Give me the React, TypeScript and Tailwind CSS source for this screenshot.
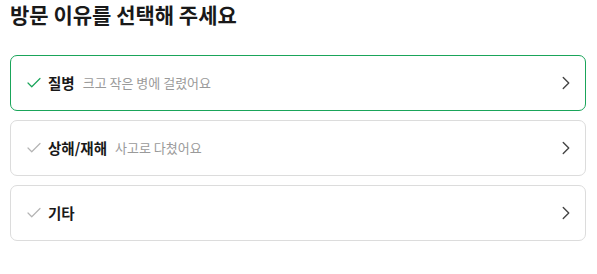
import { Check, ChevronRight } from "lucide-react";

const reasons = [
  { label: "질병", desc: "크고 작은 병에 걸렸어요", selected: true },
  { label: "상해/재해", desc: "사고로 다쳤어요", selected: false },
  { label: "기타", desc: "", selected: false },
];

export default function App() {
  return (
    <div
      className="w-[597px] h-[274px] bg-white px-[10px]"
      style={{ fontFamily: '"Noto Sans CJK KR", "Noto Sans", sans-serif' }}
    >
      <h1 className="text-[21px] leading-[28px] font-bold text-[#191919]">
        방문 이유를 선택해 주세요
      </h1>
      <div className="mt-[27px] flex flex-col gap-[9px] w-[576px]">
        {reasons.map((r) => (
          <button
            key={r.label}
            className={`flex items-center h-[56px] rounded-[7px] border bg-white pl-[14px] pr-[8px] text-left ${
              r.selected ? "border-[#1aa55a]" : "border-[#dcdcdc]"
            }`}
          >
            <Check
              size={18}
              strokeWidth={1.6}
              className={r.selected ? "text-[#1aa55a]" : "text-[#b4b4b4]"}
            />
            <span className="ml-[5px] text-[14.5px] font-bold text-[#191919]">
              {r.label}
            </span>
            {r.desc && (
              <span className="ml-[8px] text-[13px] text-[#9a9a9a]">
                {r.desc}
              </span>
            )}
            <ChevronRight
              size={22}
              strokeWidth={1.5}
              className="ml-auto text-[#444]"
            />
          </button>
        ))}
      </div>
    </div>
  );
}
